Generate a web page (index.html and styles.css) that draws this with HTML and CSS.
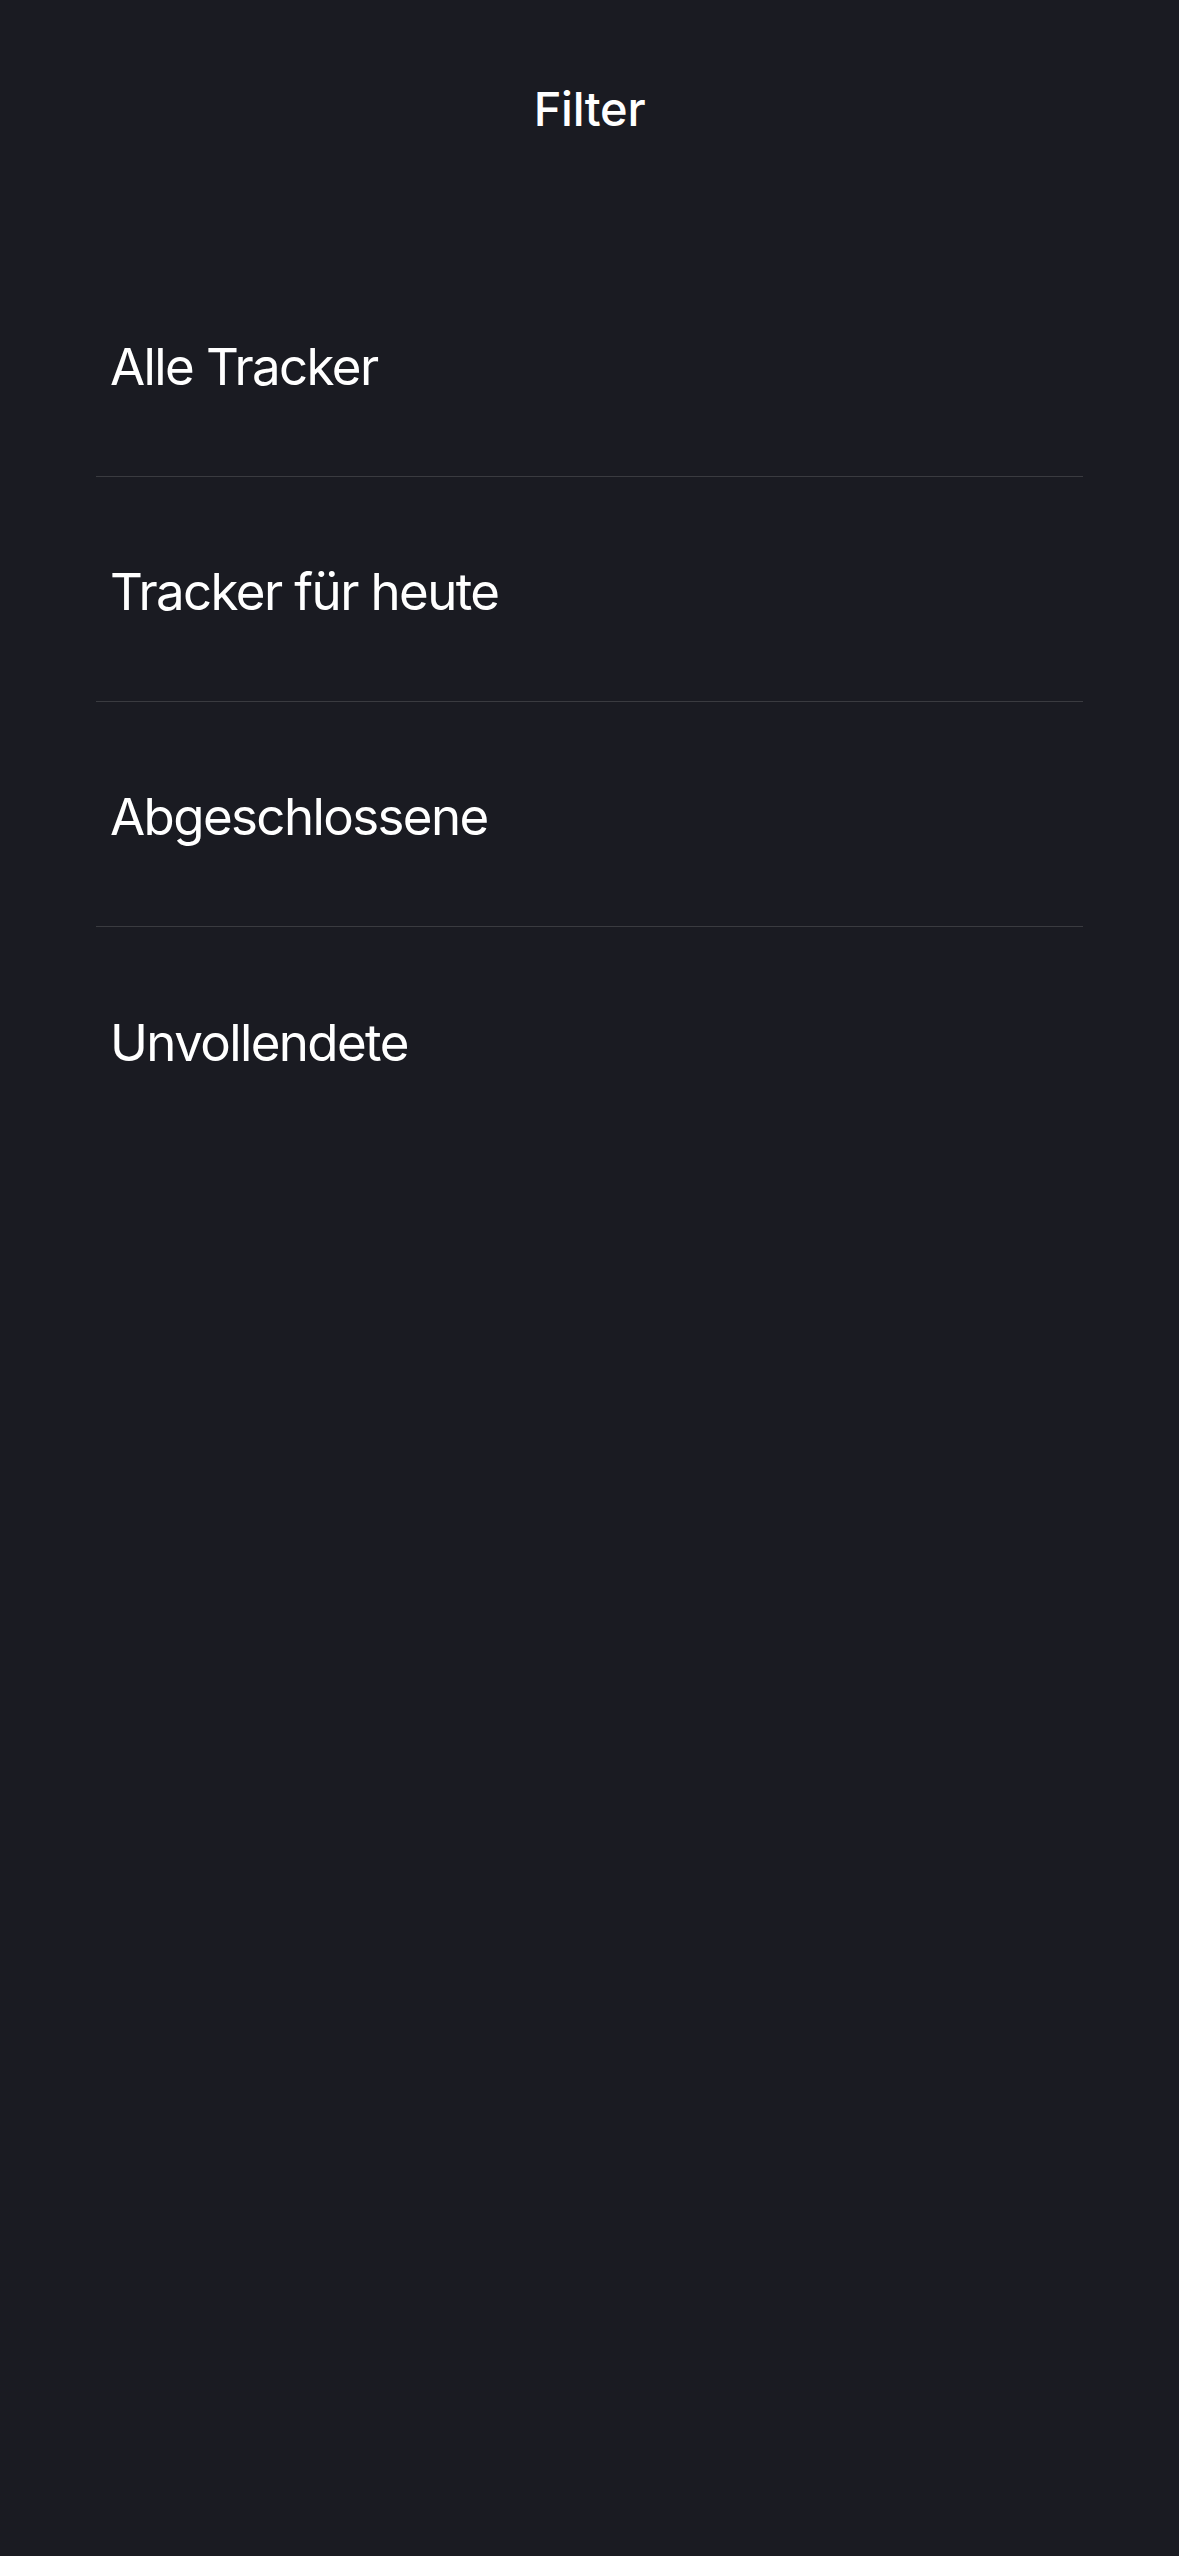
FILE: index.html
```html
<!DOCTYPE html>
<html lang="de">
<head>
<meta charset="utf-8">
<title>Filter</title>
<link rel="stylesheet" href="styles.css">
</head>
<body>
<div class="screen">
  <header class="header">
    <h1 class="title">Filter</h1>
  </header>
  <ul class="list">
    <li class="row">Alle Tracker</li>
    <li class="row">Tracker für heute</li>
    <li class="row">Abgeschlossene</li>
    <li class="row">Unvollendete</li>
  </ul>
</div>
</body>
</html>
```
FILE: styles.css
```css
html, body {
  margin: 0;
  padding: 0;
  background: #1a1b22;
}
.screen {
  width: 1179px;
  min-height: 2556px;
  background: #1a1b22;
  color: #ffffff;
  font-family: Inter, "Noto Sans", sans-serif;
}
.header {
  box-sizing: border-box;
  height: 252px;
  padding-top: 80px;
  display: flex;
  justify-content: center;
  align-items: flex-start;
}
.title {
  margin: 0;
  font-size: 47px;
  font-weight: 500;
  line-height: normal;
  letter-spacing: -0.3px;
}
.list {
  list-style: none;
  margin: 0 96px;
  padding: 0;
}
.row {
  box-sizing: border-box;
  height: 225px;
  padding: 5px 14px 0;
  display: flex;
  align-items: center;
  font-size: 51px;
  font-weight: 400;
  letter-spacing: -1.6px;
  border-bottom: 1px solid #3a3b40;
}
.row:last-child {
  border-bottom: none;
}
```
